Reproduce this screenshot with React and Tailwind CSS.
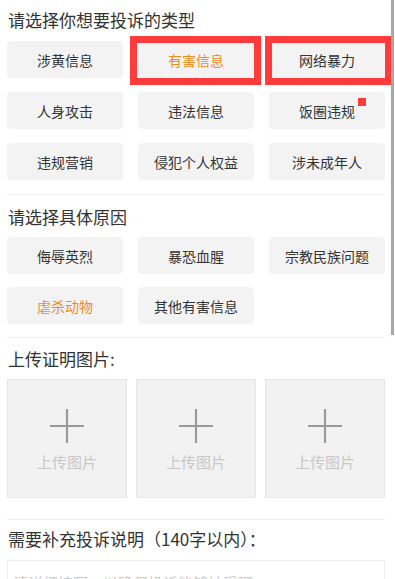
import React from "react";

const types = [
  { text: "涉黄信息" },
  { text: "有害信息", active: true },
  { text: "网络暴力" },
  { text: "人身攻击" },
  { text: "违法信息" },
  { text: "饭圈违规", dot: true },
  { text: "违规营销" },
  { text: "侵犯个人权益" },
  { text: "涉未成年人" },
];

const reasons = [
  { text: "侮辱英烈" },
  { text: "暴恐血腥" },
  { text: "宗教民族问题" },
  { text: "虐杀动物", active: true },
  { text: "其他有害信息" },
];

const Tag = ({ text, active, dot }) => (
  <div className="relative h-[37px] rounded-[4px] bg-[#f3f3f3] flex items-center justify-center">
    <span
      className={`text-[14px] leading-none ${
        active ? "text-[#ef8b1f]" : "text-[#333333]"
      }`}
    >
      {text}
    </span>
    {dot && (
      <span className="absolute left-[89px] top-[6px] w-[8px] h-[8px] bg-[#ff3b3b]"></span>
    )}
  </div>
);

const Upload = () => (
  <div className="h-[119px] bg-[#f2f2f2] border border-[#e6e6e6] flex flex-col items-center">
    <svg width="36" height="36" viewBox="0 0 36 36" className="mt-[28px]">
      <path d="M18 1v34M1 18h34" stroke="#9a9a9a" strokeWidth="2.2" />
    </svg>
    <span className="mt-[10px] text-[15px] leading-none text-[#c8c8c8]">
      上传图片
    </span>
  </div>
);

export default function App() {
  return (
    <div
      className="relative w-[395px] h-[579px] overflow-hidden bg-white pl-[7px] pr-[10px] pt-[8px]"
      style={{ fontFamily: '"Noto Sans CJK SC", "Noto Sans", sans-serif' }}
    >
      {/* 投诉类型 */}
      <h2 className="pl-[1px] text-[17px] leading-[24px] text-[#333333]">
        请选择你想要投诉的类型
      </h2>
      <div className="mt-[9px] grid grid-cols-3 gap-x-[15px] gap-y-[14px]">
        {types.map((t) => (
          <Tag key={t.text} {...t} />
        ))}
      </div>

      <div className="mt-[14px] h-px bg-[#eeeeee]"></div>

      {/* 具体原因 */}
      <h2 className="mt-[10px] pl-[1px] text-[17px] leading-[24px] text-[#333333]">
        请选择具体原因
      </h2>
      <div className="mt-[8px] grid grid-cols-3 gap-x-[15px] gap-y-[13px]">
        {reasons.map((t) => (
          <Tag key={t.text} {...t} />
        ))}
      </div>

      <div className="mt-[13px] h-px bg-[#eeeeee]"></div>

      {/* 上传图片 */}
      <h2 className="mt-[9px] pl-[1px] text-[17px] leading-[24px] text-[#333333]">
        上传证明图片:
      </h2>
      <div className="mt-[8px] grid grid-cols-3 gap-[9px]">
        <Upload />
        <Upload />
        <Upload />
      </div>

      <div className="mt-[21px] h-px bg-[#eeeeee]"></div>

      {/* 补充说明 */}
      <h2 className="mt-[7px] pl-[1px] text-[17px] leading-[24px] text-[#333333]">
        需要补充投诉说明（140字以内）：
      </h2>
      <div className="mt-[9px] h-[60px] border border-[#eeeeee] px-[5px] pt-[9px]">
        <span className="text-[15px] leading-none text-[#cccccc]">
          请详细填写，以确保投诉能够被受理
        </span>
      </div>

      {/* 标注框 */}
      <div className="absolute left-[130px] top-[36px] w-[131px] h-[49px] border-[7px] border-[#ff3b3b]"></div>
      <div className="absolute left-[265px] top-[36px] w-[127px] h-[49px] border-[7px] border-[#ff3b3b]"></div>

      {/* scrollbar */}
      <div className="absolute right-[1px] top-0 w-[3px] h-[335px] bg-[#a8a8a8]"></div>
    </div>
  );
}
